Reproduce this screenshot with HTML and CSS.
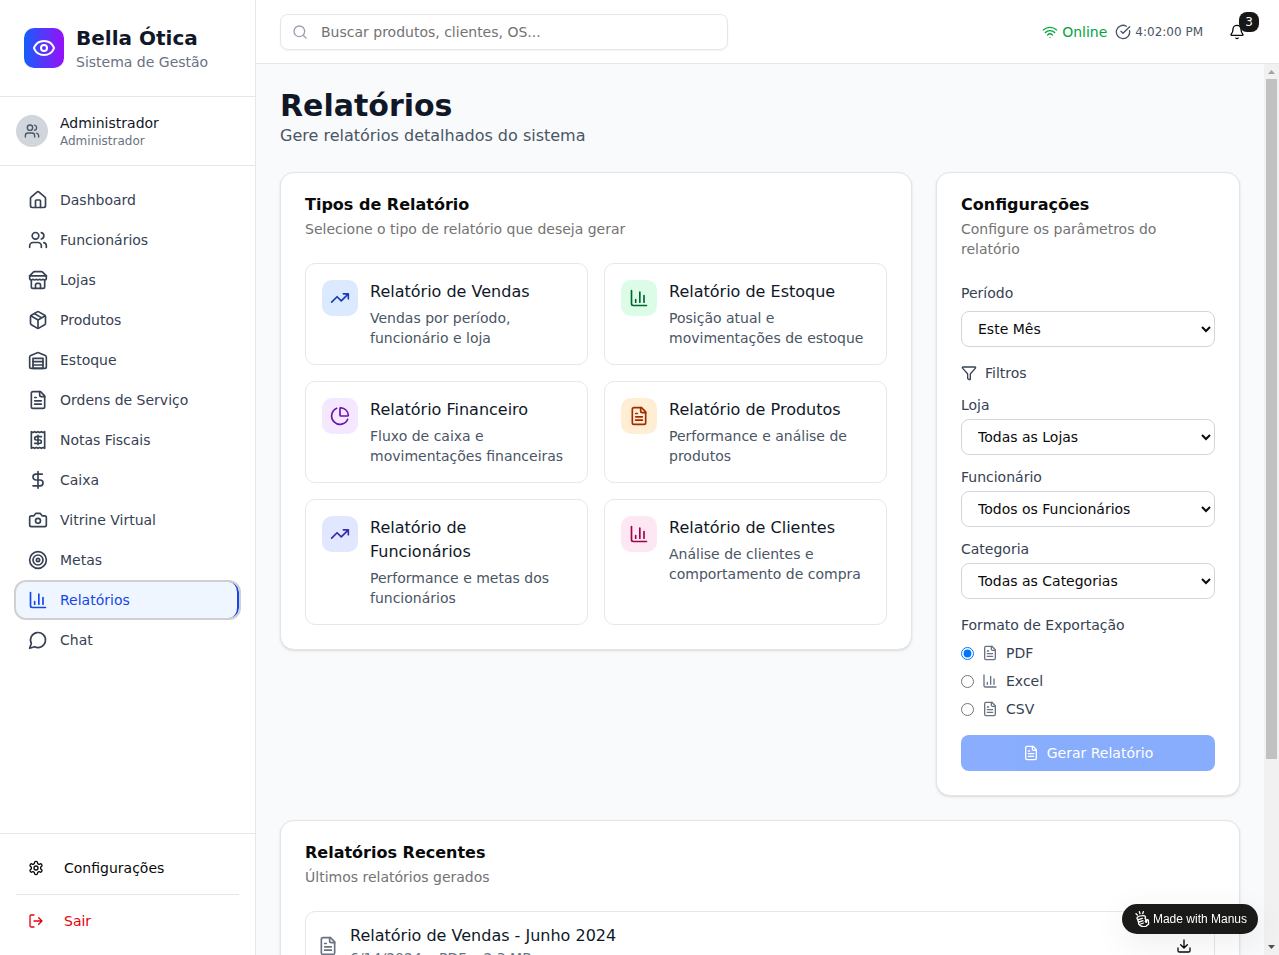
FILE: index.html
```html
<!DOCTYPE html>
<html lang="pt-BR">
<head>
<meta charset="utf-8">
<meta name="viewport" content="width=device-width, initial-scale=1">
<title>Relatórios - Bella Ótica</title>
<link rel="stylesheet" href="styles.css">
</head>
<body>
<svg class="sprite" aria-hidden="true">
  <symbol id="eye" viewBox="0 0 24 24"><path d="M2.062 12.348a1 1 0 0 1 0-.696 10.75 10.75 0 0 1 19.876 0 1 1 0 0 1 0 .696 10.75 10.75 0 0 1-19.876 0"/><circle cx="12" cy="12" r="3"/></symbol>
  <symbol id="users" viewBox="0 0 24 24"><path d="M16 21v-2a4 4 0 0 0-4-4H6a4 4 0 0 0-4 4v2"/><circle cx="9" cy="7" r="4"/><path d="M22 21v-2a4 4 0 0 0-3-3.87M16 3.13a4 4 0 0 1 0 7.75"/></symbol>
  <symbol id="house" viewBox="0 0 24 24"><path d="M15 21v-8a1 1 0 0 0-1-1h-4a1 1 0 0 0-1 1v8"/><path d="M3 10a2 2 0 0 1 .709-1.528l7-5.999a2 2 0 0 1 2.582 0l7 5.999A2 2 0 0 1 21 10v9a2 2 0 0 1-2 2H5a2 2 0 0 1-2-2z"/></symbol>
  <symbol id="store" viewBox="0 0 24 24"><path d="m2 7 4.41-4.41A2 2 0 0 1 7.83 2h8.34a2 2 0 0 1 1.42.59L22 7"/><path d="M4 12v8a2 2 0 0 0 2 2h12a2 2 0 0 0 2-2v-8"/><path d="M15 22v-4a2 2 0 0 0-2-2h-2a2 2 0 0 0-2 2v4M2 7h20"/><path d="M22 7v3a2 2 0 0 1-2 2a2.7 2.7 0 0 1-1.59-.63.7.7 0 0 0-.82 0A2.7 2.7 0 0 1 16 12a2.7 2.7 0 0 1-1.59-.63.7.7 0 0 0-.82 0A2.7 2.7 0 0 1 12 12a2.7 2.7 0 0 1-1.59-.63.7.7 0 0 0-.82 0A2.7 2.7 0 0 1 8 12a2.7 2.7 0 0 1-1.59-.63.7.7 0 0 0-.82 0A2.7 2.7 0 0 1 4 12a2 2 0 0 1-2-2V7"/></symbol>
  <symbol id="package" viewBox="0 0 24 24"><path d="M11 21.73a2 2 0 0 0 2 0l7-4A2 2 0 0 0 21 16V8a2 2 0 0 0-1-1.73l-7-4a2 2 0 0 0-2 0l-7 4A2 2 0 0 0 3 8v8a2 2 0 0 0 1 1.73z"/><path d="M12 22V12M3.29 7 12 12l8.71-5M7.5 4.27l9 5.15"/></symbol>
  <symbol id="warehouse" viewBox="0 0 24 24"><path d="M22 8.35V20a2 2 0 0 1-2 2H4a2 2 0 0 1-2-2V8.35A2 2 0 0 1 3.26 6.5l8-3.2a2 2 0 0 1 1.48 0l8 3.2A2 2 0 0 1 22 8.35Z"/><path d="M6 18h12M6 14h12"/><rect x="6" y="10" width="12" height="12"/></symbol>
  <symbol id="file" viewBox="0 0 24 24"><path d="M15 2H6a2 2 0 0 0-2 2v16a2 2 0 0 0 2 2h12a2 2 0 0 0 2-2V7Z"/><path d="M14 2v4a2 2 0 0 0 2 2h4M10 9H8M16 13H8M16 17H8"/></symbol>
  <symbol id="receipt" viewBox="0 0 24 24"><path d="M4 2v20l2-1 2 1 2-1 2 1 2-1 2 1 2-1 2 1V2l-2 1-2-1-2 1-2-1-2 1-2-1-2 1Z"/><path d="M16 8h-6a2 2 0 1 0 0 4h4a2 2 0 1 1 0 4H8M12 17.5v-11"/></symbol>
  <symbol id="dollar" viewBox="0 0 24 24"><path d="M12 2v20M17 5H9.500a3.500 3.500 0 0 0 0 7h5a3.500 3.500 0 0 1 0 7H6"/></symbol>
  <symbol id="camera" viewBox="0 0 24 24"><path d="M14.500 4h-5L7 7H4a2 2 0 0 0-2 2v9a2 2 0 0 0 2 2h16a2 2 0 0 0 2-2V9a2 2 0 0 0-2-2h-3l-2.500-3z"/><circle cx="12" cy="13" r="3"/></symbol>
  <symbol id="target" viewBox="0 0 24 24"><circle cx="12" cy="12" r="10"/><circle cx="12" cy="12" r="6"/><circle cx="12" cy="12" r="2"/></symbol>
  <symbol id="chart" viewBox="0 0 24 24"><path d="M3 3v16a2 2 0 0 0 2 2h16M18 17V9M13 17V5M8 17v-3"/></symbol>
  <symbol id="chat" viewBox="0 0 24 24"><path d="M7.900 20A9 9 0 1 0 4 16.100L2 22Z"/></symbol>
  <symbol id="settings" viewBox="0 0 24 24"><path d="M12.220 2h-.44a2 2 0 0 0-2 2v.18a2 2 0 0 1-1 1.730l-.43.25a2 2 0 0 1-2 0l-.15-.08a2 2 0 0 0-2.730.73l-.22.38a2 2 0 0 0 .73 2.730l.15.1a2 2 0 0 1 1 1.720v.51a2 2 0 0 1-1 1.740l-.15.09a2 2 0 0 0-.73 2.730l.22.38a2 2 0 0 0 2.730.73l.15-.08a2 2 0 0 1 2 0l.43.25a2 2 0 0 1 1 1.730V20a2 2 0 0 0 2 2h.44a2 2 0 0 0 2-2v-.18a2 2 0 0 1 1-1.730l.43-.25a2 2 0 0 1 2 0l.15.08a2 2 0 0 0 2.730-.73l.22-.39a2 2 0 0 0-.73-2.730l-.15-.08a2 2 0 0 1-1-1.740v-.5a2 2 0 0 1 1-1.740l.15-.09a2 2 0 0 0 .73-2.730l-.22-.38a2 2 0 0 0-2.730-.73l-.15.08a2 2 0 0 1-2 0l-.43-.25a2 2 0 0 1-1-1.730V4a2 2 0 0 0-2-2z"/><circle cx="12" cy="12" r="3"/></symbol>
  <symbol id="logout" viewBox="0 0 24 24"><path d="m16 17 5-5-5-5M21 12H9M9 21H5a2 2 0 0 1-2-2V5a2 2 0 0 1 2-2h4"/></symbol>
  <symbol id="search" viewBox="0 0 24 24"><circle cx="11" cy="11" r="8"/><path d="m21 21-4.300-4.300"/></symbol>
  <symbol id="wifi" viewBox="0 0 24 24"><path d="M12 20h.01M2 8.820a15 15 0 0 1 20 0M5 12.859a10 10 0 0 1 14 0M8.500 16.429a5 5 0 0 1 7 0"/></symbol>
  <symbol id="check" viewBox="0 0 24 24"><path d="M21.801 10A10 10 0 1 1 17 3.335M9 11l3 3L22 4"/></symbol>
  <symbol id="bell" viewBox="0 0 24 24"><path d="M10.268 21a2 2 0 0 0 3.464 0M3.262 15.326A1 1 0 0 0 4 17h16a1 1 0 0 0 .74-1.673C19.410 13.956 18 12.499 18 8A6 6 0 0 0 6 8c0 4.499-1.411 5.956-2.738 7.326"/></symbol>
  <symbol id="trend" viewBox="0 0 24 24"><path d="M22 7l-8.500 8.500-5-5L2 17M16 7h6v6"/></symbol>
  <symbol id="pie" viewBox="0 0 24 24"><path d="M21 12c.552 0 1.005-.449.95-.998a10 10 0 0 0-8.953-8.951c-.55-.055-.998.398-.998.95v8a1 1 0 0 0 1 1z"/><path d="M21.210 15.890A10 10 0 1 1 8 2.830"/></symbol>
  <symbol id="funnel" viewBox="0 0 24 24"><path d="M10 20a1 1 0 0 0 .553.895l2 1A1 1 0 0 0 14 21v-7a2 2 0 0 1 .517-1.341L21.740 4.670A1 1 0 0 0 21 3H3a1 1 0 0 0-.742 1.670l7.225 7.989A2 2 0 0 1 10 14z"/></symbol>
  <symbol id="download" viewBox="0 0 24 24"><path d="M12 15V3M21 15v4a2 2 0 0 1-2 2H5a2 2 0 0 1-2-2v-4M7 10l5 5 5-5"/></symbol>
  <symbol id="hand" viewBox="0 0 24 24"><path d="M3 4l2 2M8 1l1 3M14 1l-1 3"/><path d="M5 9.500c2-2 5-2.500 9-2.500 3 0 4 2 2.500 4 1.500 1 1.500 3 .5 5l1.500 1 .5-3c.5-1.500 2.500-1 2.500.5l.5 5-4 3.500c-4 1-8 0-10-2.500-1.500-1-1.500-3-.5-4-2-1-2-2.500-1-3.500-2-.5-2.500-2-1.500-3.500z"/><path d="M6.500 13l6-2M7.500 16.500l6-2M10 19.500l4-1.500"/></symbol>
</svg>

<div class="app">
  <aside class="sidebar">
    <div class="brand">
      <span class="brand-logo"><svg class="icon icon-lg"><use href="#eye"/></svg></span>
      <div>
        <div class="brand-name">Bella Ótica</div>
        <div class="brand-sub">Sistema de Gestão</div>
      </div>
    </div>
    <div class="user">
      <span class="avatar"><svg class="icon"><use href="#users"/></svg></span>
      <div>
        <div class="user-name">Administrador</div>
        <div class="user-role">Administrador</div>
      </div>
    </div>
    <nav class="nav">
      <a class="nav-link" href="#"><svg class="icon icon-md"><use href="#house"/></svg>Dashboard</a>
      <a class="nav-link" href="#"><svg class="icon icon-md"><use href="#users"/></svg>Funcionários</a>
      <a class="nav-link" href="#"><svg class="icon icon-md"><use href="#store"/></svg>Lojas</a>
      <a class="nav-link" href="#"><svg class="icon icon-md"><use href="#package"/></svg>Produtos</a>
      <a class="nav-link" href="#"><svg class="icon icon-md"><use href="#warehouse"/></svg>Estoque</a>
      <a class="nav-link" href="#"><svg class="icon icon-md"><use href="#file"/></svg>Ordens de Serviço</a>
      <a class="nav-link" href="#"><svg class="icon icon-md"><use href="#receipt"/></svg>Notas Fiscais</a>
      <a class="nav-link" href="#"><svg class="icon icon-md"><use href="#dollar"/></svg>Caixa</a>
      <a class="nav-link" href="#"><svg class="icon icon-md"><use href="#camera"/></svg>Vitrine Virtual</a>
      <a class="nav-link" href="#"><svg class="icon icon-md"><use href="#target"/></svg>Metas</a>
      <a class="nav-link nav-link-active" href="#" aria-current="page"><svg class="icon icon-md"><use href="#chart"/></svg>Relatórios</a>
      <a class="nav-link" href="#"><svg class="icon icon-md"><use href="#chat"/></svg>Chat</a>
    </nav>
    <div class="sidebar-footer">
      <button class="side-button" type="button"><svg class="icon"><use href="#settings"/></svg>Configurações</button>
      <hr class="separator">
      <button class="side-button side-button-danger" type="button"><svg class="icon"><use href="#logout"/></svg>Sair</button>
    </div>
  </aside>

  <div class="content">
    <header class="topbar">
      <label class="search">
        <svg class="icon"><use href="#search"/></svg>
        <input class="search-input" type="text" aria-label="Buscar" placeholder="Buscar produtos, clientes, OS...">
      </label>
      <div class="topbar-right">
        <div class="status">
          <span class="status-item status-online"><svg class="icon"><use href="#wifi"/></svg>Online</span>
          <span class="status-item status-time"><svg class="icon"><use href="#check"/></svg>4:02:00 PM</span>
        </div>
        <button class="icon-button bell" type="button" aria-label="Notificações"><svg class="icon"><use href="#bell"/></svg><span class="badge">3</span></button>
      </div>
    </header>

    <div class="viewport">
      <main class="main">
        <div>
          <h1 class="page-title">Relatórios</h1>
          <p class="page-sub">Gere relatórios detalhados do sistema</p>
        </div>

        <div class="columns">
          <section class="card types">
            <div class="card-header">
              <h2 class="card-title">Tipos de Relatório</h2>
              <p class="card-desc">Selecione o tipo de relatório que deseja gerar</p>
            </div>
            <div class="type-grid">
              <button class="type" type="button"><span class="type-icon blue"><svg class="icon icon-md"><use href="#trend"/></svg></span><span class="type-text"><span class="type-name">Relatório de Vendas</span><span class="type-desc">Vendas por período, funcionário e loja</span></span></button>
              <button class="type" type="button"><span class="type-icon green"><svg class="icon icon-md"><use href="#chart"/></svg></span><span class="type-text"><span class="type-name">Relatório de Estoque</span><span class="type-desc">Posição atual e movimentações de estoque</span></span></button>
              <button class="type" type="button"><span class="type-icon purple"><svg class="icon icon-md"><use href="#pie"/></svg></span><span class="type-text"><span class="type-name">Relatório Financeiro</span><span class="type-desc">Fluxo de caixa e movimentações financeiras</span></span></button>
              <button class="type" type="button"><span class="type-icon orange"><svg class="icon icon-md"><use href="#file"/></svg></span><span class="type-text"><span class="type-name">Relatório de Produtos</span><span class="type-desc">Performance e análise de produtos</span></span></button>
              <button class="type" type="button"><span class="type-icon indigo"><svg class="icon icon-md"><use href="#trend"/></svg></span><span class="type-text"><span class="type-name">Relatório de Funcionários</span><span class="type-desc">Performance e metas dos funcionários</span></span></button>
              <button class="type" type="button"><span class="type-icon pink"><svg class="icon icon-md"><use href="#chart"/></svg></span><span class="type-text"><span class="type-name">Relatório de Clientes</span><span class="type-desc">Análise de clientes e comportamento de compra</span></span></button>
            </div>
          </section>

          <section class="card">
            <div class="card-header">
              <h2 class="card-title">Configurações</h2>
              <p class="card-desc">Configure os parâmetros do relatório</p>
            </div>
            <form class="form">
              <div class="field field-wide">
                <label for="periodo">Período</label>
                <select class="select" id="periodo"><option>Este Mês</option></select>
              </div>
              <div class="filters">
                <div class="filters-title"><svg class="icon"><use href="#funnel"/></svg>Filtros</div>
                <div class="field">
                  <label for="loja">Loja</label>
                  <select class="select" id="loja"><option>Todas as Lojas</option></select>
                </div>
                <div class="field">
                  <label for="funcionario">Funcionário</label>
                  <select class="select" id="funcionario"><option>Todos os Funcionários</option></select>
                </div>
                <div class="field">
                  <label for="categoria">Categoria</label>
                  <select class="select" id="categoria"><option>Todas as Categorias</option></select>
                </div>
              </div>
              <div class="field field-wide" role="radiogroup" aria-labelledby="formato">
                <span id="formato">Formato de Exportação</span>
                <label class="option"><input class="radio" type="radio" name="formato" checked><svg class="icon"><use href="#file"/></svg>PDF</label>
                <label class="option"><input class="radio" type="radio" name="formato"><svg class="icon"><use href="#chart"/></svg>Excel</label>
                <label class="option"><input class="radio" type="radio" name="formato"><svg class="icon"><use href="#file"/></svg>CSV</label>
              </div>
              <button class="submit" type="submit" disabled><svg class="icon"><use href="#file"/></svg>Gerar Relatório</button>
            </form>
          </section>
        </div>

        <section class="card">
          <div class="card-header">
            <h2 class="card-title">Relatórios Recentes</h2>
            <p class="card-desc">Últimos relatórios gerados</p>
          </div>
          <div class="recent-list">
            <div class="recent">
              <svg class="icon icon-md"><use href="#file"/></svg>
              <div class="recent-text"><div class="recent-name">Relatório de Vendas - Junho 2024</div><div class="recent-meta">6/14/2024 • PDF • 2.3 MB</div></div>
              <button class="icon-button" type="button" aria-label="Baixar"><svg class="icon"><use href="#download"/></svg></button>
            </div>
          </div>
        </section>
      </main>
      <div class="scrollbar" aria-hidden="true">
        <svg class="scroll-arrow scroll-arrow-up" viewBox="0 0 15 15"><path d="M4 10h7L7.500 6z"/></svg>
        <div class="scroll-track"><div class="scroll-thumb"></div></div>
        <svg class="scroll-arrow scroll-arrow-down" viewBox="0 0 15 15"><path d="M4 5h7L7.500 9z"/></svg>
      </div>
    </div>
  </div>
</div>

<a class="made-with" href="#"><svg class="icon icon-hand"><use href="#hand"/></svg>Made with Manus</a>
</body>
</html>
```

FILE: styles.css
```css
*, *::before, *::after { box-sizing: border-box; }

body, h1, h2, p, hr { margin: 0; }

body {
  font-family: "DejaVu Sans", sans-serif;
  font-size: 14px;
  line-height: 20px;
  color: #0a0a0a;
  background: #f9fafb;
}

button, input, select { font: inherit; color: inherit; margin: 0; }
button { border: 0; background: none; padding: 0; cursor: pointer; }
a { text-decoration: none; }

.sprite { display: none; }

.icon {
  width: 16px;
  height: 16px;
  flex: none;
  fill: none;
  stroke: currentColor;
  stroke-width: 2;
  stroke-linecap: round;
  stroke-linejoin: round;
}
.icon-md { width: 20px; height: 20px; }
.icon-lg { width: 24px; height: 24px; }

.app { display: flex; height: 100vh; }

/* Sidebar */
.sidebar {
  display: flex;
  flex-direction: column;
  flex: none;
  width: 256px;
  background: #fff;
  border-right: 1px solid #e5e7eb;
}

.brand {
  display: flex;
  align-items: center;
  gap: 12px;
  padding: 24px;
  border-bottom: 1px solid #e5e7eb;
}
.brand-logo {
  display: grid;
  place-items: center;
  width: 40px;
  height: 40px;
  border-radius: 10px;
  background: linear-gradient(to right, #155dfc, #9810fa);
  color: #fff;
}
.brand-name { font-size: 20px; line-height: 28px; font-weight: 700; color: #101828; }
.brand-sub { color: #6a7282; }

.user {
  display: flex;
  align-items: center;
  gap: 12px;
  padding: 16px;
  border-bottom: 1px solid #e5e7eb;
}
.avatar {
  display: grid;
  place-items: center;
  width: 32px;
  height: 32px;
  border-radius: 50%;
  background: #d1d5dc;
  color: #4a5565;
}
.user-name { color: #101828; }
.user-role { font-size: 12px; line-height: 16px; color: #6a7282; }

.nav {
  display: flex;
  flex-direction: column;
  flex: 1;
  gap: 4px;
  padding: 16px;
}
.nav-link {
  display: flex;
  align-items: center;
  gap: 12px;
  padding: 8px 12px;
  border-radius: 10px;
  color: #364153;
}
.nav-link-active {
  background: #eff6ff;
  color: #1447e6;
  border-right: 2px solid #1447e6;
  outline: 2px solid #d0d0d0;
}

.sidebar-footer { padding: 16px; border-top: 1px solid #e5e7eb; }
.side-button {
  display: flex;
  align-items: center;
  gap: 20px;
  width: 100%;
  padding: 8px 12px;
}
.side-button-danger { color: #e7000b; }
.separator { border: 0; height: 1px; margin: 8px 0; background: #e5e5e5; }

/* Top bar */
.content { display: flex; flex-direction: column; flex: 1; min-width: 0; }

.topbar {
  display: flex;
  align-items: center;
  justify-content: space-between;
  flex: none;
  height: 64px;
  padding: 0 24px;
  background: #fff;
  border-bottom: 1px solid #e5e7eb;
}
.search {
  display: flex;
  align-items: center;
  gap: 13px;
  width: 448px;
  height: 36px;
  padding: 0 11px;
  border: 1px solid #e5e5e5;
  border-radius: 8px;
  box-shadow: 0 1px 2px rgba(0, 0, 0, 0.05);
  color: #99a1af;
}
.search-input {
  flex: 1;
  min-width: 0;
  padding: 0;
  border: 0;
  outline: 0;
  background: none;
  color: #0a0a0a;
}
.search-input::placeholder { color: #737373; opacity: 1; }

.topbar-right { display: flex; align-items: center; gap: 16px; }
.status { display: flex; align-items: center; gap: 8px; }
.status-item { display: flex; align-items: center; gap: 4px; }
.status-online { color: #00a63e; }
.status-time { font-size: 12px; line-height: 16px; color: #4a5565; }

.icon-button {
  display: grid;
  place-items: center;
  flex: none;
  width: 36px;
  height: 32px;
}
.bell { position: relative; }
.badge {
  position: absolute;
  top: -4px;
  right: -4px;
  width: 20px;
  height: 20px;
  border-radius: 8px;
  background: #171717;
  color: #fafafa;
  font-size: 12px;
  line-height: 20px;
  text-align: center;
}

/* Scrolling page area */
.viewport { display: flex; flex: 1; min-height: 0; }

.main {
  display: flex;
  flex-direction: column;
  flex: 1;
  gap: 24px;
  min-width: 0;
  padding: 24px;
  overflow-y: auto;
  scrollbar-width: none;
}
.main > * { flex: none; }

.scrollbar {
  display: flex;
  flex-direction: column;
  flex: none;
  width: 15px;
  background: #f1f1f1;
}
.scroll-arrow { flex: none; width: 15px; height: 15px; }
.scroll-arrow-up { fill: #a3a3a3; }
.scroll-arrow-down { fill: #505050; }
.scroll-track { flex: 1; padding: 0 2px; }
.scroll-thumb { height: 79%; background: #c1c1c1; }

.page-title { font-size: 30px; line-height: 36px; font-weight: 700; color: #101828; }
.page-sub { font-size: 16px; line-height: 24px; color: #4a5565; }

.columns {
  display: grid;
  grid-template-columns: repeat(3, minmax(0, 1fr));
  align-items: start;
  gap: 24px;
}
.types { grid-column: span 2; }

.card {
  display: flex;
  flex-direction: column;
  gap: 24px;
  padding: 24px;
  background: #fff;
  border: 1px solid #e5e5e5;
  border-radius: 14px;
  box-shadow: 0 1px 3px rgba(0, 0, 0, 0.1), 0 1px 2px -1px rgba(0, 0, 0, 0.1);
}
.card-header { display: flex; flex-direction: column; gap: 6px; }
.card-title { font-size: 16px; line-height: 16px; font-weight: 700; }
.card-desc { color: #737373; }

.type-grid { display: grid; grid-template-columns: repeat(2, minmax(0, 1fr)); gap: 16px; }
.type {
  display: flex;
  align-items: flex-start;
  gap: 12px;
  padding: 16px;
  border: 1px solid #e5e7eb;
  border-radius: 10px;
  text-align: left;
}
.type-icon { display: grid; padding: 8px; border-radius: 10px; }
.type-text { display: flex; flex-direction: column; flex: 1; gap: 4px; min-width: 0; }
.type-name { font-size: 16px; line-height: 24px; color: #101828; }
.type-desc { color: #4a5565; }

.blue { background: #dbeafe; color: #193cb8; }
.green { background: #dcfce7; color: #016630; }
.purple { background: #f3e8ff; color: #6e11b0; }
.orange { background: #ffedd4; color: #9f2d00; }
.indigo { background: #e0e7ff; color: #372aac; }
.pink { background: #fce7f3; color: #a3004c; }

/* Settings form */
.form { display: flex; flex-direction: column; gap: 16px; color: #364153; }
.field { display: flex; flex-direction: column; gap: 4px; }
.field-wide { gap: 8px; }
.filters { display: flex; flex-direction: column; gap: 12px; }
.filters-title { display: flex; align-items: center; gap: 8px; }
.select {
  width: 100%;
  height: 36px;
  padding: 0 12px;
  border: 1px solid #d1d5dc;
  border-radius: 8px;
  background: #fff;
  color: #0a0a0a;
}
.option { display: flex; align-items: center; gap: 8px; }
.option .icon { color: #6a7282; }
.radio { width: 13px; height: 13px; }
.submit {
  display: flex;
  align-items: center;
  justify-content: center;
  gap: 8px;
  height: 36px;
  border-radius: 8px;
  background: #155dfc;
  color: #fff;
  opacity: 0.5;
}

/* Recent reports */
.recent-list { display: flex; flex-direction: column; gap: 12px; }
.recent {
  display: flex;
  align-items: center;
  gap: 12px;
  padding: 12px;
  border: 1px solid #e5e7eb;
  border-radius: 10px;
}
.recent > .icon { color: #6a7282; }
.recent-text { flex: 1; }
.recent-name { font-size: 16px; line-height: 24px; color: #101828; }
.recent-meta { color: #6a7282; }

.made-with {
  position: fixed;
  right: 21px;
  bottom: 21px;
  display: flex;
  align-items: center;
  gap: 3px;
  height: 30px;
  padding: 0 11px 0 12px;
  border-radius: 15px;
  background: #1a1a19;
  box-shadow: 0 8px 32px rgba(0, 0, 0, 0.08);
  color: #fff;
  font-family: "Liberation Sans", sans-serif;
  font-size: 12px;
}
```
